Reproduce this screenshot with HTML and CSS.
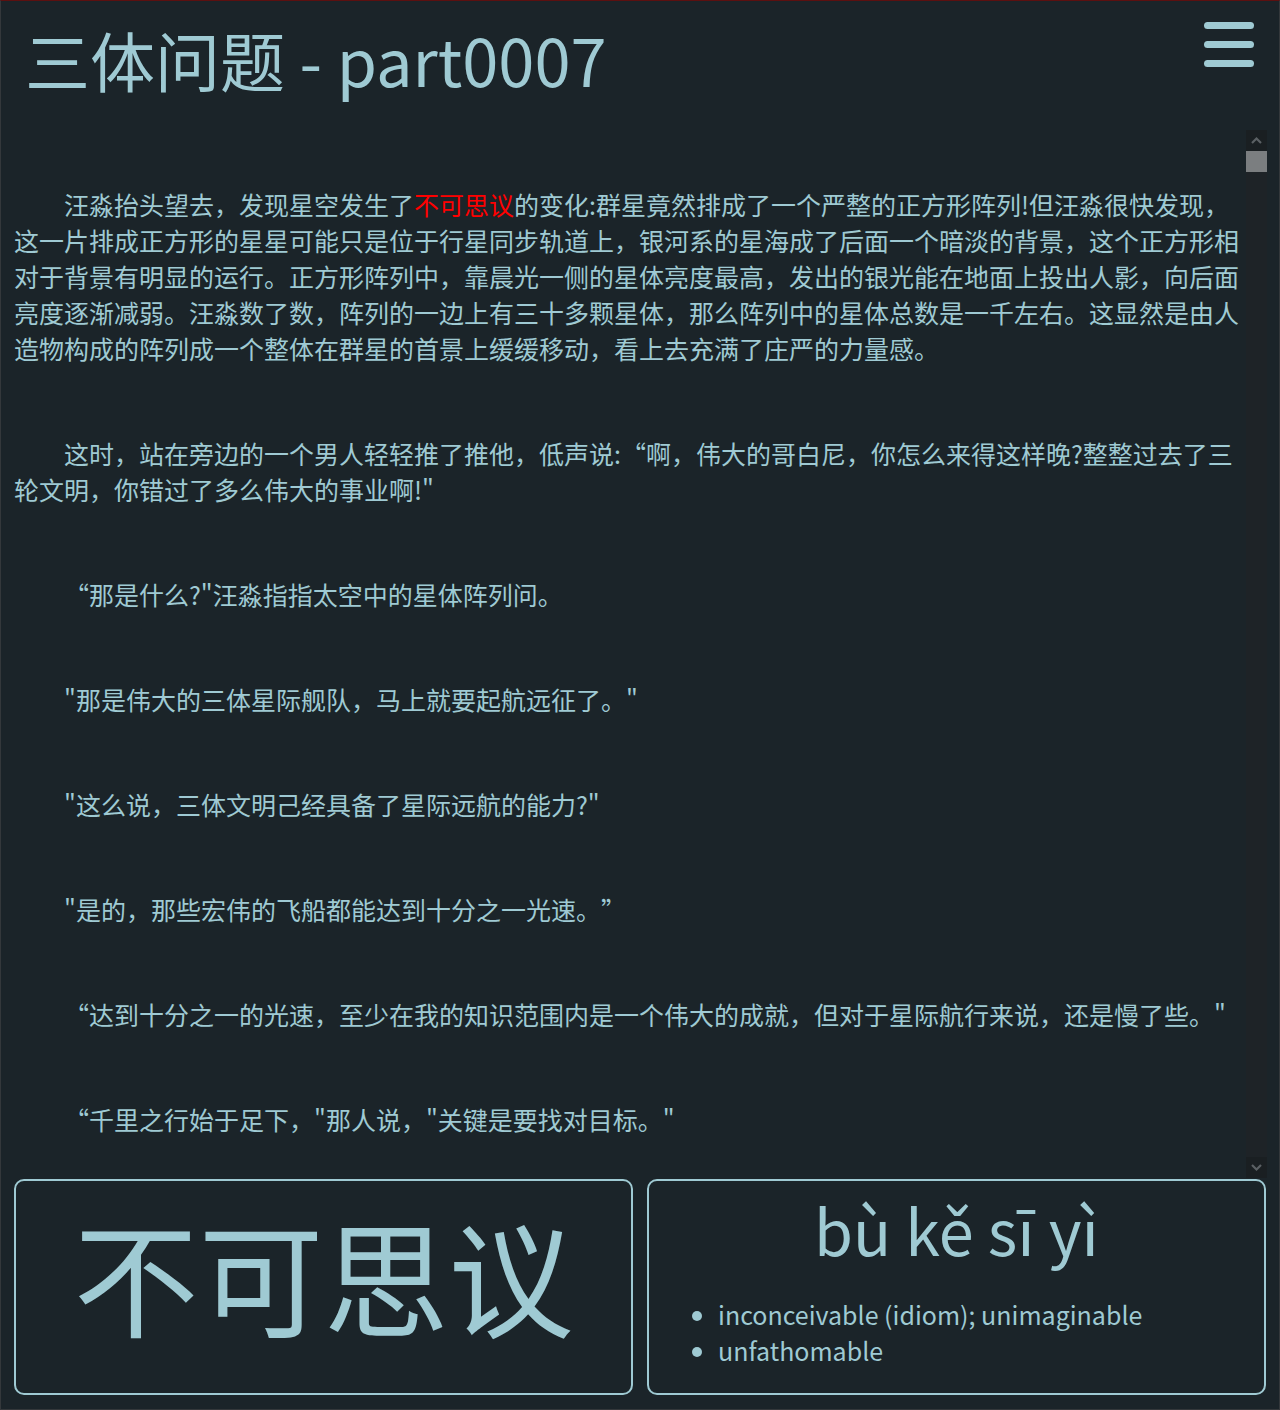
FILE: index.html
```html
<!DOCTYPE html>
<html lang="zh-CN">
<head>
<meta charset="utf-8">
<title>三体问题 - part0007</title>
<link rel="stylesheet" href="styles.css">
</head>
<body>
<div class="app">
  <header class="header">
    <h1 class="title">三体问题 - part0007</h1>
    <button class="menu" aria-label="menu">
      <span class="bar"></span>
      <span class="bar"></span>
      <span class="bar"></span>
    </button>
  </header>
  <main class="reader">
    <div class="text">
      <p>汪淼抬头望去，发现星空发生了<span class="hl">不可思议</span>的变化:群星竟然排成了一个严整的正方形阵列!但汪淼很快发现，这一片排成正方形的星星可能只是位于行星同步轨道上，银河系的星海成了后面一个暗淡的背景，这个正方形相对于背景有明显的运行。正方形阵列中，靠晨光一侧的星体亮度最高，发出的银光能在地面上投出人影，向后面亮度逐渐减弱。汪淼数了数，阵列的一边上有三十多颗星体，那么阵列中的星体总数是一千左右。这显然是由人造物构成的阵列成一个整体在群星的首景上缓缓移动，看上去充满了庄严的力量感。</p>
      <p>这时，站在旁边的一个男人轻轻推了推他，低声说:“啊，伟大的哥白尼，你怎么来得这样晚?整整过去了三轮文明，你错过了多么伟大的事业啊!"</p>
      <p>“那是什么?"汪淼指指太空中的星体阵列问。</p>
      <p>"那是伟大的三体星际舰队，马上就要起航远征了。"</p>
      <p>"这么说，三体文明己经具备了星际远航的能力?"</p>
      <p>"是的，那些宏伟的飞船都能达到十分之一光速。”</p>
      <p>“达到十分之一的光速，至少在我的知识范围内是一个伟大的成就，但对于星际航行来说，还是慢了些。"</p>
      <p>“千里之行始于足下，"那人说，"关键是要找对目标。"</p>
    </div>
    <div class="scrollbar">
      <div class="sb-btn"><svg width="21" height="21" viewBox="0 0 21 21"><path d="M6 13 L10.5 8.5 L15 13" fill="none" stroke="#5b6064" stroke-width="2.2"/></svg></div>
      <div class="sb-thumb"></div>
      <div class="sb-track"></div>
      <div class="sb-btn"><svg width="21" height="21" viewBox="0 0 21 21"><path d="M6 8 L10.5 12.5 L15 8" fill="none" stroke="#5b6064" stroke-width="2.2"/></svg></div>
    </div>
  </main>
  <section class="cards">
    <div class="card word-card">
      <div class="hanzi">不可思议</div>
    </div>
    <div class="card def-card">
      <div class="pinyin">bù kě sī yì</div>
      <ul class="defs">
        <li>inconceivable (idiom); unimaginable</li>
        <li>unfathomable</li>
      </ul>
    </div>
  </section>
</div>
</body>
</html>
```

FILE: styles.css
```css
* { box-sizing: border-box; }
html, body {
  margin: 0;
  padding: 0;
  background: #1b2429;
}
body {
  font-family: "Noto Sans CJK SC", "Noto Sans", sans-serif;
  color: #9fcad3;
  text-spacing-trim: space-all;
}
.app {
  width: 1280px;
  height: 1410px;
  border: 1px solid #34383b;
  border-top-color: #5c1010;
  display: flex;
  flex-direction: column;
  background: #1b2429;
}
.header {
  height: 129px;
  flex: none;
  display: flex;
  justify-content: space-between;
  align-items: flex-start;
  padding: 11px 25px 0 24px;
}
.title {
  margin: 0;
  font-size: 65px;
  font-weight: 400;
  line-height: normal;
}
.menu {
  margin-top: 10px;
  padding: 0;
  border: 0;
  background: none;
  display: flex;
  flex-direction: column;
  gap: 12px;
  width: 50px;
}
.bar {
  display: block;
  width: 50px;
  height: 7px;
  border-radius: 4px;
  background: #9fcad3;
}
.reader {
  height: 1048px;
  flex: none;
  display: flex;
  padding-right: 12px;
}
.text {
  flex: 1;
  overflow: hidden;
  padding: 56px 0 0 13px;
  font-size: 25px;
  line-height: normal;
}
.text p {
  margin: 0 0 69px;
  text-indent: 2em;
}
.hl { color: #ff0000; }
.scrollbar {
  width: 21px;
  flex: none;
  display: flex;
  flex-direction: column;
  background: #1e2327;
}
.sb-btn {
  height: 21px;
  flex: none;
  background: #1a1f22;
}
.sb-btn svg { display: block; }
.sb-thumb {
  height: 21px;
  flex: none;
  background: #7b7e80;
}
.sb-track { flex: 1; }
.cards {
  flex: 1;
  display: flex;
  gap: 14px;
  padding: 1px 13px 14px;
}
.card {
  flex: 1;
  border: 2px solid #9fcad3;
  border-radius: 10px;
}
.word-card {
  display: flex;
  align-items: center;
  justify-content: center;
}
.hanzi {
  font-size: 125px;
  line-height: 1;
  margin-bottom: 28px;
}
.def-card {
  display: flex;
  flex-direction: column;
  align-items: stretch;
}
.pinyin {
  text-align: center;
  font-size: 63px;
  line-height: normal;
  margin-top: 2px;
}
.defs {
  margin: 22px 0 0;
  padding-left: 69px;
  font-size: 25px;
  line-height: normal;
}
```
